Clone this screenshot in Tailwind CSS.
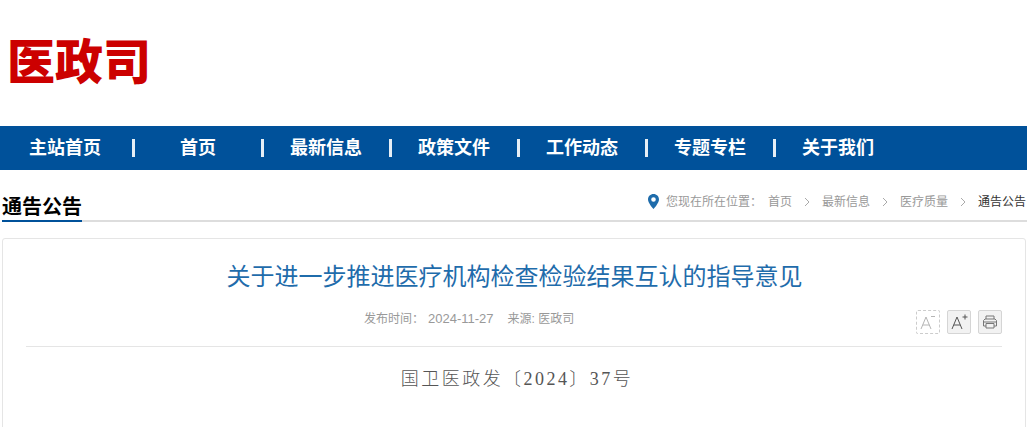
<!DOCTYPE html>
<html lang="zh-CN">
<head>
    <meta charset="UTF-8">
    <title>关于进一步推进医疗机构检查检验结果互认的指导意见</title>
    <script src="https://cdn.jsdelivr.net/npm/@tailwindcss/browser@4"></script>
</head>
<body class="bg-white overflow-hidden font-['Liberation_Sans','Noto_Sans_CJK_SC',sans-serif]">
    <div class="w-[1027px] h-[427px] overflow-hidden">
        <!-- Logo -->
        <div class="h-[126px] pl-[7px] pt-[37px]">
            <h1 class="text-[48px] leading-[52px] font-black text-[#cc0000]">医政司</h1>
        </div>

        <!-- Nav -->
        <nav class="h-[44px] bg-[#00519a] flex items-center text-white text-[18px] font-bold">
            <a class="w-[132px] pr-[2px] text-center">主站首页</a>
            <span class="w-[3px] h-[18px] bg-white/90"></span>
            <a class="w-[126px] text-center">首页</a>
            <span class="w-[3px] h-[18px] bg-white/90"></span>
            <a class="w-[125px] pr-[1px] text-center">最新信息</a>
            <span class="w-[3px] h-[18px] bg-white/90"></span>
            <a class="w-[125px] pr-[1px] text-center">政策文件</a>
            <span class="w-[3px] h-[18px] bg-white/90"></span>
            <a class="w-[125px] pr-[1px] text-center">工作动态</a>
            <span class="w-[3px] h-[18px] bg-white/90"></span>
            <a class="w-[125px] pr-[1px] text-center">专题专栏</a>
            <span class="w-[3px] h-[18px] bg-white/90"></span>
            <a class="w-[125px] pr-[1px] text-center">关于我们</a>
        </nav>

        <!-- Section header -->
        <div class="mt-[21px] h-[31px] ml-[2px] border-b-2 border-[#dddddd] flex justify-between">
            <h2 class="h-[31px] w-[80px] border-b-2 border-[#00519a] text-[20px] leading-[32px] font-bold text-black whitespace-nowrap">通告公告</h2>
            <div class="flex items-center h-[21px] pr-[1px] text-[12px] text-[#999999] whitespace-nowrap">
                <svg class="w-[11px] h-[15px] mr-[7px]" viewBox="0 0 11 15">
                    <path fill-rule="evenodd" fill="#1f6cab" d="M5.5 0C2.4 0 0 2.4 0 5.4 0 9 5.5 15 5.5 15S11 9 11 5.4C11 2.4 8.6 0 5.5 0zM5.5 3.2a2.3 2.3 0 1 1 0 4.6 2.3 2.3 0 0 1 0-4.6z"/>
                </svg>
                <span>您现在所在位置：</span>
                <span class="ml-[6px]">首页</span>
                <svg class="w-[6px] h-[10px] mx-[12px]" viewBox="0 0 6 10"><path d="M1 1l4 4-4 4" fill="none" stroke="#aaaaaa"/></svg>
                <span>最新信息</span>
                <svg class="w-[6px] h-[10px] mx-[12px]" viewBox="0 0 6 10"><path d="M1 1l4 4-4 4" fill="none" stroke="#aaaaaa"/></svg>
                <span>医疗质量</span>
                <svg class="w-[6px] h-[10px] mx-[12px]" viewBox="0 0 6 10"><path d="M1 1l4 4-4 4" fill="none" stroke="#aaaaaa"/></svg>
                <span class="text-[#333333]">通告公告</span>
            </div>
        </div>

        <!-- Article -->
        <div class="mt-[16px] ml-[2px] w-[1024px] h-[300px] border border-[#e5e5e5] rounded-[3px] px-[23px]">
            <h3 class="pt-[21px] pl-[1px] text-center text-[24px] leading-[34px] text-[#1f6cab]">关于进一步推进医疗机构检查检验结果互认的指导意见</h3>
            <div class="relative mt-[16px] h-[37px] border-b border-[#e5e5e5]">
                <p class="pl-[338px] text-[12px] leading-[18px] text-[#999999]">发布时间：<span class="ml-[4px] text-[13px]">2024-11-27</span><span class="ml-[14px]">来源: 医政司</span></p>
                <div class="absolute right-0 top-0 flex gap-[7px]">
                    <span class="w-[24px] h-[24px] border border-dashed border-[#cccccc] rounded-[2px] flex items-center justify-center">
                        <svg class="w-[18px] h-[16px]" viewBox="0 0 18 16" fill="none" stroke="#b5b5b5"><path d="M2 15L7 3l5 12M3.8 11h6.4M12 2.5h4"/></svg>
                    </span>
                    <span class="w-[24px] h-[24px] border border-[#d5d5d5] bg-[#f2f2f2] rounded-[2px] flex items-center justify-center">
                        <svg class="w-[18px] h-[16px]" viewBox="0 0 18 16" fill="none" stroke="#555555"><path d="M2 15L7 3l5 12M3.8 11h6.4M12.5 3h5M15 .5v5"/></svg>
                    </span>
                    <span class="w-[24px] h-[24px] border border-[#d5d5d5] bg-[#f2f2f2] rounded-[2px] flex items-center justify-center">
                        <svg class="w-[16px] h-[14px]" viewBox="0 0 16 14" fill="none" stroke="#777777"><path d="M4 4V1h8v3M4 11H1.5V5.5L3 4h10l1.5 1.5V11H12M4 8.5h8V13H4zM1.5 7h13"/></svg>
                    </span>
                </div>
            </div>
            <p class="mt-[18px] pl-[6px] text-center text-[18px] leading-[28px] tracking-[2.45px] text-[#555555] font-light font-['Liberation_Serif','Noto_Sans_CJK_SC',serif]">国卫医政发〔2024〕37号</p>
        </div>
    </div>
</body>
</html>
